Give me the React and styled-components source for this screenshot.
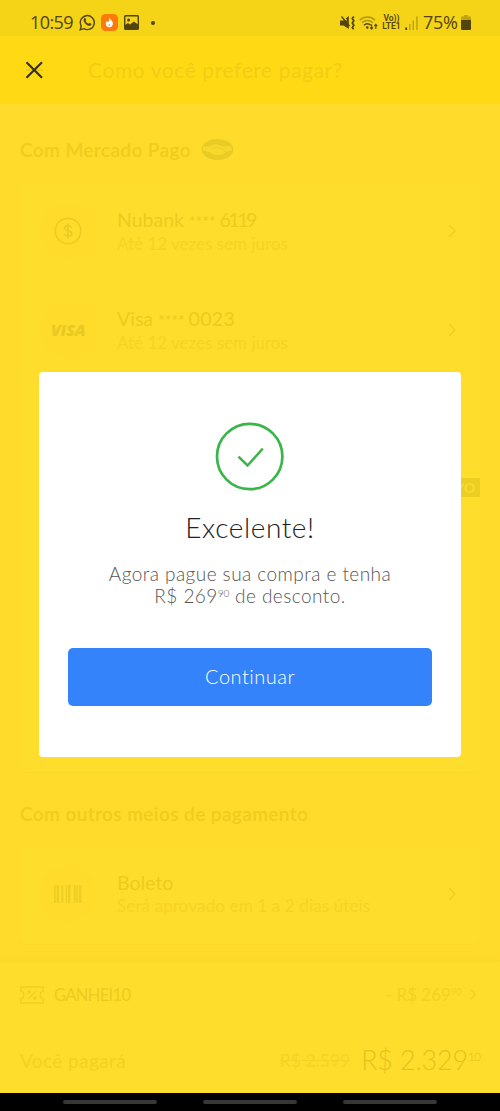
import React from 'react';
import styled, { createGlobalStyle } from 'styled-components';

const GlobalStyle = createGlobalStyle`
    * {
        box-sizing: border-box;
    }
    body {
        margin: 0;
        background: #ffdc2b;
        font-family: Lato, "Open Sans", sans-serif;
    }
`;

const Screen = styled.div`
    position: relative;
    display: flex;
    flex-direction: column;
    width: 500px;
    height: 1111px;
    overflow: hidden;
    background: #ffdb2b;
`;

/* status bar */
const StatusBar = styled.div`
    display: flex;
    align-items: center;
    justify-content: space-between;
    height: 36px;
    padding: 9px 29px 0 30px;
    background: #f5d317;
    color: #51450c;
    font-family: "Open Sans", "Noto Sans", sans-serif;
`;
const StatusGroup = styled.div`
    display: flex;
    align-items: center;
    height: 27px;
    gap: ${p => p.gap}px;
`;
const StatusText = styled.span`
    width: ${p => p.width}px;
    font-size: 18px;
    line-height: 27px;
    letter-spacing: ${p => p.spacing}px;
    white-space: nowrap;
`;
const Lte = styled.span`
    display: flex;
    flex-direction: column;
    align-items: center;
    width: 19px;
    margin-top: -2px;
    font-family: Roboto, "Liberation Sans", sans-serif;
    font-size: 8.5px;
    line-height: 8px;
    font-weight: 600;
    white-space: nowrap;
`;
const MoreDot = styled.span`
    width: 4px;
    height: 4px;
    margin-left: 7px;
    border-radius: 50%;
    background: #51450c;
`;

/* header */
const Header = styled.div`
    display: flex;
    align-items: center;
    height: 68px;
    padding-left: 25px;
    background: #ffda14;
`;
const HeaderTitle = styled.h1`
    margin: 0 0 2px 44px;
    font-size: 21px;
    font-weight: 400;
    letter-spacing: 0.58px;
    color: #f2cd14;
`;
const CloseButton = styled.button`
    display: flex;
    padding: 0;
    border: 0;
    background: none;
`;

/* list of payment methods */
const Content = styled.div`
    height: 858px;
    padding: 31px 20px 0;
`;
const SectionTitle = styled.h2`
    display: flex;
    align-items: center;
    gap: 10px;
    height: 28px;
    margin: 0 0 ${p => p.space}px;
    font-size: 19px;
    font-weight: 600;
    letter-spacing: 0.4px;
    color: #efcc1e;
`;
const Card = styled.div`
    height: ${p => p.height}px;
    margin-bottom: 27px;
    border-radius: 6px;
    background: #ffdd2c;
    box-shadow: 0 1px 1px #fbd928;
`;
const Row = styled.div`
    display: flex;
    align-items: center;
    height: 98.5px;
    padding: 0 24px 2px 20px;
    & + & {
        border-top: 1px solid #ffde30;
    }
`;
const RowIcon = styled.div`
    display: flex;
    align-items: center;
    justify-content: center;
    width: 56px;
    height: 56px;
    margin-right: 21px;
    border-radius: 50%;
    background: #ffdc2b;
`;
const RowText = styled.div`
    flex: 1;
`;
const RowTitle = styled.div`
    font-size: 19.5px;
    line-height: 23px;
    color: #edcb1f;
`;
const Mask = styled.span`
    margin: 0 4px 0 5px;
    font-size: 16px;
    letter-spacing: -0.2px;
`;
const Digits = styled.span`
    letter-spacing: ${p => p.spacing}px;
`;
const RowNote = styled.div`
    font-size: 17px;
    line-height: 23px;
    letter-spacing: ${p => p.spacing || 0}px;
    color: #f6d326;
`;
const BadgeRow = styled(Row)`
    align-items: flex-start;
    justify-content: flex-end;
    height: 100px;
    padding-right: 0;
    margin-top: -2px;
`;
const NewBadge = styled.span`
    padding: 0 5px;
    background: #eccd24;
    color: #fbda2b;
    font-size: 14px;
    font-weight: 700;
    line-height: 19px;
`;
const VisaMark = styled.span`
    font-family: "Open Sans", sans-serif;
    font-size: 16.5px;
    font-weight: 800;
    font-style: italic;
    line-height: 20px;
    letter-spacing: -0.4px;
    color: #e9c923;
`;

/* summary */
const Summary = styled.div`
    height: 131px;
    padding: 0 20px;
    background: #ffdd2c;
    box-shadow: 0 -4px 6px #fbd929;
`;
const SummaryRow = styled.div`
    display: flex;
    align-items: center;
    height: ${p => p.height}px;
    padding-right: ${p => p.end || 0}px;
`;
const Coupon = styled.span`
    flex: 1;
    margin-left: 10px;
    font-size: 16.5px;
    letter-spacing: -0.65px;
    color: #edcb1f;
`;
const Discount = styled.span`
    margin-right: 9px;
    font-size: 17px;
    color: #f4d124;
`;
const TotalLabel = styled.span`
    flex: 1;
    font-size: 19px;
    letter-spacing: 0.4px;
    color: #f4d124;
`;
const OldPrice = styled.span`
    margin-right: 11px;
    font-size: 17.5px;
    text-decoration: line-through;
    color: #f6d326;
`;
const Total = styled.span`
    font-size: 26.8px;
    font-weight: 300;
    letter-spacing: -0.1px;
    color: #e4c31d;
`;
const Cents = styled.sup`
    font-size: ${p => p.size}px;
    line-height: 0;
    vertical-align: ${p => p.lift}px;
    letter-spacing: ${p => p.spacing || 0}px;
`;

/* android navigation */
const NavBar = styled.div`
    display: flex;
    justify-content: center;
    align-items: center;
    gap: 46px;
    height: 18px;
    background: #000;
`;
const NavPill = styled.span`
    width: 94px;
    height: 4px;
    border-radius: 2px;
    background: #373737;
`;

/* dialog */
const Overlay = styled.div`
    position: absolute;
    top: 372px;
    left: 39px;
    right: 39px;
`;
const Dialog = styled.div`
    display: flex;
    flex-direction: column;
    align-items: center;
    height: 385px;
    padding: 50px 29px 0;
    border-radius: 4px;
    background: #fff;
`;
const DialogTitle = styled.h3`
    margin: 19px 0 0;
    font-size: 28px;
    line-height: 34px;
    font-weight: 300;
    letter-spacing: 0.6px;
    color: #222;
`;
const DialogText = styled.p`
    margin: 19px 0 0;
    font-size: 19px;
    line-height: 22px;
    font-weight: 300;
    letter-spacing: 0.45px;
    text-align: center;
    white-space: nowrap;
    color: #555;
`;
const ContinueButton = styled.button`
    width: 100%;
    height: 58px;
    margin-top: 41px;
    padding: 0 0 3px;
    border: 0;
    border-radius: 5px;
    background: #3483fa;
    color: #fff;
    font-family: inherit;
    font-size: 20px;
    font-weight: 300;
    letter-spacing: 0.5px;
`;

const WhatsAppIcon = () => (
    <svg width="17" height="17" viewBox="0 0 17 17" fill="none" stroke="#51450c">
        <path d="M1.2 15.800l1-3.800a7 7 0 1 1 2.700 2.700z" strokeWidth="1.400" />
        <path d="M5.200 4.600c.9-.9 1.300-.5 1.900 1 .2.6-.5 1-.5 1.400.6 1.400 1.700 2.300 3 2.800.5-.2.800-1.100 1.300-.9 1.600.8 2 .8 1.400 1.800-1 1.600-3 1.300-5.200-.3C4.800 8.600 4 6.200 5.200 4.600z" fill="#51450c" stroke="none" />
    </svg>
);

const FireIcon = () => (
    <svg width="17" height="17" viewBox="0 0 17 17">
        <rect width="17" height="17" rx="4.500" fill="#fb7a0c" />
        <path d="M8 3.300c.3 2 3.900 3 3.900 6.200 0 2.400-1.600 3.800-3.600 3.800-2.100 0-3.500-1.400-3.500-3.300 0-1.500.8-2 1-3.200.8.500 1 1.100 1 1.700C8.300 7.200 8.500 5.500 8 3.300z" fill="#fff" />
        <path d="M8.400 9.500c.3.700.9 1 .9 1.700 0 .5-.4.800-1 .8s-1-.3-1-.8c0-.7.800-1 1.100-1.700z" fill="#fcae6d" />
    </svg>
);

const GalleryIcon = () => (
    <svg width="15" height="15" viewBox="0 0 15 15">
        <rect x="0.700" y="0.700" width="13.600" height="13.600" rx="0.800" fill="none" stroke="#51450c" strokeWidth="1.400" />
        <circle cx="4.600" cy="5" r="1.500" fill="#51450c" />
        <path d="M1 10l3-2 2 1.500L9.800 6.500l4.200 3V14H1z" fill="#51450c" />
    </svg>
);

const MutedIcon = () => (
    <svg width="15" height="16" viewBox="0 0 15 16">
        <path d="M0 5.500h3.200L8.800 1v13L3.500 10.500H0z" fill="#51450c" />
        <path d="M2.500 1l4 4.500" stroke="#f5d317" strokeWidth="1.600" />
        <path d="M1.500 1.500l8 9.500" stroke="#51450c" strokeWidth="1.300" />
        <path d="M13.800 1.500l-1.500 2.100 1.500 2.200-1.500 2.200 1.500 2.200-1.500 2.200 1.300 2" fill="none" stroke="#51450c" strokeWidth="1.700" />
    </svg>
);

const WifiIcon = () => (
    <svg width="19" height="16" viewBox="0 0 19 16" fill="none">
        <path d="M.8 5.200a10.500 10.500 0 0 1 15.200 0M3 7.700a7.600 7.600 0 0 1 10.800 0" stroke="#b19812" strokeWidth="1.400" />
        <path d="M5 10.200a4.800 4.800 0 0 1 6.800 0" stroke="#51450c" strokeWidth="1.500" />
        <circle cx="8.300" cy="12.500" r="1.300" fill="#51450c" />
        <path d="M12.600 9.500v4.500M11.200 12.300l1.400 1.800 1.400-1.800M16.800 14V9.500M15.400 11.200l1.400-1.800 1.400 1.800" stroke="#51450c" strokeWidth="1.100" />
    </svg>
);

const SignalIcon = () => (
    <svg width="14" height="14" viewBox="0 0 14 14">
        <path d="M.3 11.500h1.800V14H.3z" fill="#51450c" />
        <path d="M4 8h1.500v6H4zM7.500 4.500H9V14H7.500zM11.200.5h1.500V14h-1.500z" fill="#bea411" />
    </svg>
);

const BatteryIcon = () => (
    <svg width="10" height="15" viewBox="0 0 10 15">
        <path d="M3 0h4v1.500h2.200q.8 0 .8.800V5H0V2.300q0-.8.800-.8H3z" fill="#bea411" />
        <path d="M0 5h10v9q0 1-1 1H1q-1 0-1-1z" fill="#51450c" />
    </svg>
);

const CloseIcon = () => (
    <svg width="19" height="18" viewBox="0 0 19 18" fill="none">
        <path d="M1 9h17" stroke="#edcb18" strokeWidth="2" />
        <path d="M1.500 1.200l15.500 15.600M17 1.200L1.500 16.800" stroke="#34301b" strokeWidth="2.200" />
    </svg>
);

const HandshakeIcon = () => (
    <svg width="33" height="23" viewBox="0 0 33 22" fill="none">
        <ellipse cx="16.500" cy="11" rx="15.800" ry="10.500" fill="#e8cc25" />
        <path d="M2.500 7.200c4 1.300 6.500.7 9.300-.7 2-.9 3.500-.8 5 .1 3.500 1.700 8 2 13.300.4.800 2 1 3.500.3 5.300l-5.200 1.300c-2.500 3-6 3.200-9 2.600-3.500.5-6.200-.8-8-3l-5.700-.8c-.7-2-.7-3.500 0-5.200z" fill="#f5d82b" />
        <path d="M11 8.500c1 2.500 3.500 1 5.500 0 3 1.500 6 3.200 8.500 5.500" stroke="#ebcf27" />
    </svg>
);

const DollarIcon = () => (
    <svg width="28" height="28" viewBox="0 0 28 28" fill="none" stroke="#edcc22" strokeWidth="1.700">
        <circle cx="14" cy="14" r="12.700" />
        <path d="M17.500 10.500c-.6-1-1.800-1.600-3.400-1.600-2 0-3.500.9-3.500 2.400 0 3.600 7.300 1.700 7.300 5.200 0 1.700-1.700 2.600-3.800 2.600-1.900 0-3.400-.8-4-2.100M14 6.500v15" />
    </svg>
);

const BarcodeIcon = () => (
    <svg width="28" height="18" viewBox="0 0 28 18" fill="#edce25">
        <path d="M0 0h1.800v18H0zM2.600 0h2.400v18H2.600zM7.300 0h2v18h-2zM11.700 0h1.500v18h-1.500zM13.900 0h2.600v18h-2.600zM19.800 0h1.800v18h-1.800zM22.300 0h1.500v18h-1.500zM24.900 0h2.500v18h-2.500z" />
    </svg>
);

const ChevronIcon = ({ size = 14 }) => (
    <svg width={size * 0.6} height={size} viewBox="0 0 8.400 14" fill="none">
        <path d="M1 1l6 6-6 6" stroke="#efce22" strokeWidth="1.400" />
    </svg>
);

const CouponIcon = () => (
    <svg width="24" height="18" viewBox="0 0 24 18" fill="none" stroke="#f0cf23" strokeWidth="1.300">
        <path d="M.8 1h22.400v4.200a3.900 3.900 0 0 0 0 7.600V17H.8v-4.200a3.900 3.900 0 0 0 0-7.600z" />
        <path d="M8 13l8-8" />
        <circle cx="9" cy="6" r="1" />
        <circle cx="15" cy="12" r="1" />
    </svg>
);

const SuccessIcon = () => (
    <svg width="70" height="69" viewBox="0 0 70 69" fill="none" stroke="#39b54a" strokeWidth="2.700">
        <circle cx="34.700" cy="34.500" r="32.700" />
        <path d="M23.500 34.700l9 8.800 15.300-17" strokeWidth="2.500" />
    </svg>
);

const Method = ({ icon, name, digits, digitSpacing, note, noteSpacing }) => (
    <Row>
        <RowIcon>{icon}</RowIcon>
        <RowText>
            <RowTitle>
                {name}
                {digits && <Mask>****</Mask>}
                {digits && <Digits spacing={digitSpacing}>{digits}</Digits>}
            </RowTitle>
            <RowNote spacing={noteSpacing}>{note}</RowNote>
        </RowText>
        <ChevronIcon />
    </Row>
);

const App = () => (
    <>
        <GlobalStyle />
        <Screen>
            <StatusBar>
                <StatusGroup gap={5.5}>
                    <StatusText width={43} spacing={-0.6}>10:59</StatusText>
                    <WhatsAppIcon />
                    <FireIcon />
                    <GalleryIcon />
                    <MoreDot />
                </StatusGroup>
                <StatusGroup gap={4}>
                    <MutedIcon />
                    <WifiIcon />
                    <Lte>
                        <span>Vo))</span>
                        <span>LTE1</span>
                    </Lte>
                    <SignalIcon />
                    <StatusText width={34} spacing={-0.3}>75%</StatusText>
                    <BatteryIcon />
                </StatusGroup>
            </StatusBar>
            <Header>
                <CloseButton aria-label="Fechar"><CloseIcon /></CloseButton>
                <HeaderTitle>Como você prefere pagar?</HeaderTitle>
            </Header>
            <Content>
                <SectionTitle space={20}>
                    Com Mercado Pago
                    <HandshakeIcon />
                </SectionTitle>
                <Card height={589}>
                    <Method icon={<DollarIcon />} name="Nubank" digits="6119" digitSpacing={-2.4} note="Até 12 vezes sem juros" />
                    <Method icon={<VisaMark>VISA</VisaMark>} name="Visa" digits="0023" digitSpacing={0.4} note="Até 12 vezes sem juros" />
                    <Row />
                    <BadgeRow><NewBadge>NOVO</NewBadge></BadgeRow>
                </Card>
                <SectionTitle space={19}>Com outros meios de pagamento</SectionTitle>
                <Card height={98}>
                    <Method icon={<BarcodeIcon />} name="Boleto" note="Será aprovado em 1 a 2 dias úteis" noteSpacing={0.13} />
                </Card>
            </Content>
            <Summary>
                <SummaryRow height={65} end={3}>
                    <CouponIcon />
                    <Coupon>GANHEI10</Coupon>
                    <Discount>- R$ 269<Cents size={9} lift={6}>90</Cents></Discount>
                    <ChevronIcon size={11} />
                </SummaryRow>
                <SummaryRow height={66}>
                    <TotalLabel>Você pagará</TotalLabel>
                    <OldPrice>R$ 2.599</OldPrice>
                    <Total>R$ 2.329<Cents size={12} lift={9} spacing={-0.9}>10</Cents></Total>
                </SummaryRow>
            </Summary>
            <NavBar>
                <NavPill />
                <NavPill />
                <NavPill />
            </NavBar>
            <Overlay>
                <Dialog role="dialog">
                    <SuccessIcon />
                    <DialogTitle>Excelente!</DialogTitle>
                    <DialogText>
                        Agora pague sua compra e tenha<br />
                        R$ 269<Cents size={10} lift={6}>90</Cents> de desconto.
                    </DialogText>
                    <ContinueButton>Continuar</ContinueButton>
                </Dialog>
            </Overlay>
        </Screen>
    </>
);

export default App;
